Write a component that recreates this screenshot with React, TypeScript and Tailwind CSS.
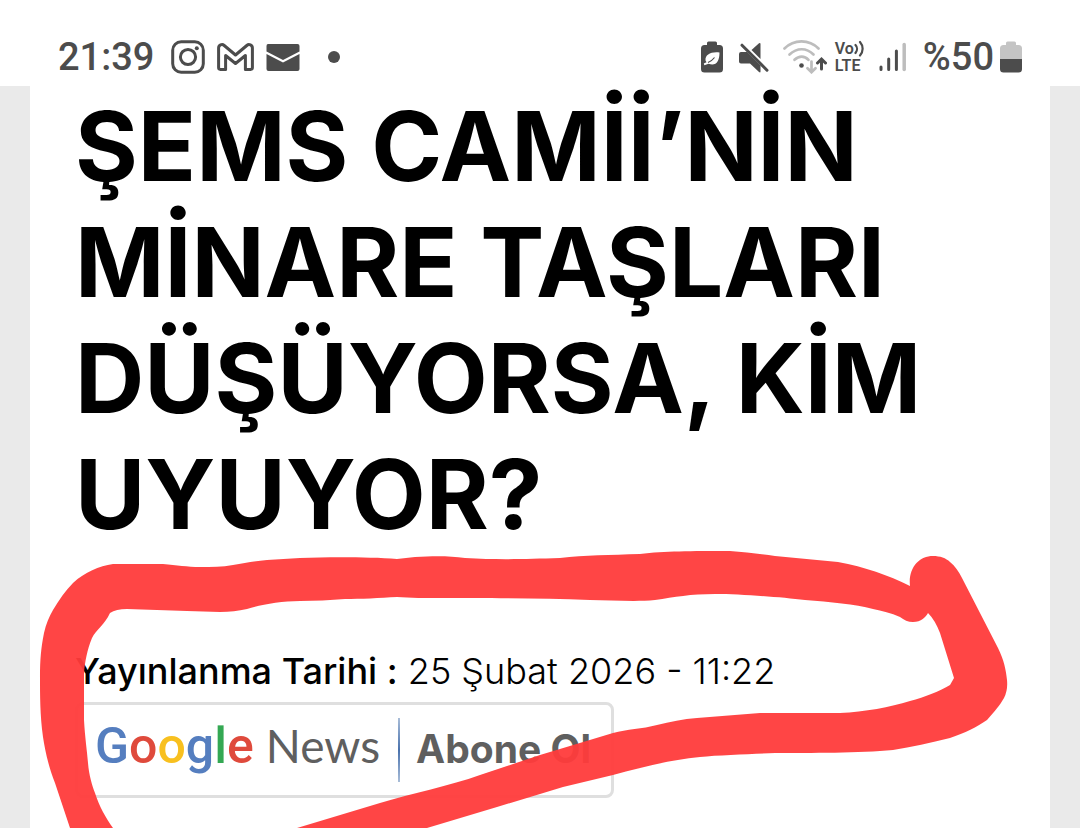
import type { ReactNode } from 'react';

const GOOGLE_LETTERS = [
  { char: 'G', className: 'text-[#557ebf]' },
  { char: 'o', className: 'text-[#df4a3c]' },
  { char: 'o', className: 'text-[#f8c01f]' },
  { char: 'g', className: 'text-[#557ebf]' },
  { char: 'l', className: 'text-[#34a853]' },
  { char: 'e', className: 'text-[#df4a3c]' },
];

function InstagramIcon() {
  return (
    <svg width="34" height="34" viewBox="0 0 34 34" fill="none" stroke="#4c4c4c" aria-hidden="true">
      <rect x="1.7" y="1.7" width="30.6" height="30.6" rx="8.5" strokeWidth="3" />
      <circle cx="17" cy="17" r="7.6" strokeWidth="3" />
      <circle cx="25.8" cy="8.2" r="2" fill="#4c4c4c" stroke="none" />
    </svg>
  );
}

function GmailIcon() {
  return (
    <svg width="37" height="28" viewBox="0 0 37 28" fill="none" stroke="#4c4c4c" strokeWidth="3" strokeLinejoin="round" aria-hidden="true">
      <path d="M1.6 5V24.6Q1.6 26.4 3.4 26.4H8.6V12.5L18.5 20.5L28.4 12.5V26.4H33.6Q35.4 26.4 35.4 24.6V5C35.4 2 32 .6 29.8 2.5L18.5 12L7.2 2.5C5 .6 1.6 2 1.6 5Z" />
    </svg>
  );
}

function MailIcon() {
  return (
    <svg width="34" height="27" viewBox="0 0 34 27" fill="#4c4c4c" aria-hidden="true">
      <path d="M2 0H31.5Q33.5 0 33.5 2V7.5L17 16L.5 7.5V2Q.5 0 2 0Z" />
      <path d="M.5 10L17 18.5L33.5 10V25Q33.5 27 31.5 27H2.5Q.5 27 .5 25Z" />
    </svg>
  );
}

function BatterySaverIcon() {
  return (
    <svg width="22" height="32" viewBox="0 0 22 32" aria-hidden="true">
      <path fill="#4c4c4c" d="M6 4V2Q6 .5 7.5 .5H14.5Q16 .5 16 2V4H18.5Q22 4 22 7.5V28Q22 31.5 18.5 31.5H3.5Q0 31.5 0 28V7.5Q0 4 3.5 4Z" />
      <path fill="#fff" d="M18.5 11.5C10 10.5 4 13.5 4.5 19.5L5.5 21.3L2.8 22.6L3.4 24.2L7.5 22.8C15 25.5 18.5 20.5 18.5 11.5Z" />
      <path fill="none" stroke="#4c4c4c" strokeWidth="1.2" d="M7 21.5C10 20.5 12 18.5 13.5 16.5" />
    </svg>
  );
}

function MutedIcon() {
  return (
    <svg width="30" height="31" viewBox="0 0 30 31" aria-hidden="true">
      <path fill="#4c4c4c" d="M2 10H8L21.5 23.5V29.5Q21.5 31 20 30L11 21.5H2Q0 21.5 0 19.5V12Q0 10 2 10Z" />
      <path fill="#4c4c4c" d="M12.5 8L20 1.2Q21.5 .3 21.5 2V17Z" />
      <path fill="none" stroke="#4c4c4c" strokeWidth="3" strokeLinecap="round" d="M3 3.2L28 28.2" />
    </svg>
  );
}

function WifiIcon() {
  return (
    <svg width="44" height="34" viewBox="0 0 44 34" fill="none" strokeWidth="2.7" strokeLinecap="round" aria-hidden="true">
      <g stroke="#bdbdbd">
        <path d="M1.5 8.5C11-1 26-1 35.5 8.5" />
        <path d="M6.5 14.5C14 7.5 23.5 7.5 30.5 14.5" />
        <path d="M11.5 19.8C16 15.5 21.5 15.5 25.5 19.8" />
        <path d="M28.5 21.5V32M24.5 28.2L28.5 32.2L32.5 28.2" />
      </g>
      <circle cx="18.5" cy="25.5" r="2.3" fill="#4c4c4c" />
      <path stroke="#4c4c4c" strokeWidth="3" d="M38.5 29V19.5M34.5 23L38.5 19L42.5 23" />
    </svg>
  );
}

function VolteIcon() {
  return (
    <div className="flex w-8 flex-col text-[16px] leading-[17px] font-semibold">
      <span className="flex items-center">
        Vo
        <svg width="11" height="17" viewBox="0 0 11 17" fill="none" stroke="#4c4c4c" strokeWidth="2.2" strokeLinecap="round" aria-hidden="true">
          <path d="M1.5 5C3.5 7 3.5 10.5 1.5 13M6 2C9.5 6 9.5 11.5 6 15.5" />
        </svg>
      </span>
      <span>LTE</span>
    </div>
  );
}

function SignalIcon() {
  return (
    <svg width="28" height="30" viewBox="0 0 28 30" fill="none" strokeWidth="3" strokeLinecap="round" aria-hidden="true">
      <path stroke="#4c4c4c" d="M2 25V27.5M9.7 17V27.5M17.4 9V27.5" />
      <path stroke="#bdbdbd" strokeWidth="3.5" d="M25.2 2.5V27.5" />
    </svg>
  );
}

function BatteryIcon() {
  return (
    <svg width="22" height="32" viewBox="0 0 22 32" aria-hidden="true">
      <path fill="#c4c4c4" d="M6 4V2Q6 .5 7.5 .5H14.5Q16 .5 16 2V4H18.5Q22 4 22 7.5V18H0V7.5Q0 4 3.5 4Z" />
      <path fill="#4c4c4c" d="M0 18H22V28Q22 31.5 18.5 31.5H3.5Q0 31.5 0 28Z" />
    </svg>
  );
}

function StatusBar() {
  return (
    <header className="flex h-[86px] items-center justify-between bg-white pt-7 pr-[58px] pl-[58px] font-['Roboto',sans-serif] text-[#4c4c4c]">
      <div className="flex items-center">
        <span className="mr-[17px] text-[38px] leading-none font-medium">21:39</span>
        <div className="flex items-center gap-3">
          <InstagramIcon />
          <GmailIcon />
          <MailIcon />
        </div>
        <span className="ml-7 size-3 rounded-full bg-[#4c4c4c]" />
      </div>
      <div className="flex items-center">
        <div className="mr-3.5 flex items-center gap-4">
          <BatterySaverIcon />
          <MutedIcon />
        </div>
        <WifiIcon />
        <div className="ml-2 flex items-center gap-3">
          <VolteIcon />
          <SignalIcon />
        </div>
        <span className="mr-1.5 ml-4 text-[38px] leading-none font-medium">%50</span>
        <BatteryIcon />
      </div>
    </header>
  );
}

function GoogleNewsButton({ children }: { children: ReactNode }) {
  return (
    <a
      href="#google-news"
      className="flex h-24 w-[539px] items-center rounded-lg border-3 border-[#dfdfdf] bg-white pl-[17px] whitespace-nowrap"
    >
      <span className="flex items-baseline pb-2">
        <span className="font-['Roboto',sans-serif] text-[50px] leading-none font-medium">
          {GOOGLE_LETTERS.map((letter, i) => (
            <span key={i} className={letter.className}>
              {letter.char}
            </span>
          ))}
        </span>
        <span className="ml-3 font-['Lato',sans-serif] text-[46px] leading-none text-[#5f5f5f]">News</span>
      </span>
      <span className="mr-4 ml-[18px] h-16 w-0.5 bg-linear-to-b from-[#a9bdd8] via-[#4a72ad] to-[#a9bdd8]" />
      <span className="pb-1 text-[39px] leading-none font-bold text-[#5f5f5f]">{children}</span>
    </a>
  );
}

// freehand marker stroke drawn over the article
function MarkerStroke() {
  return (
    <svg className="pointer-events-none absolute top-0 left-0" width="1080" height="828" viewBox="0 0 1080 828" aria-hidden="true">
      <path
        fill="#ff3b3b"
        fillOpacity="0.95"
        d="M70 828L55 783C48 765 45 750 43 737C40 715 40 695 40 677C40 660 41 648 44 633C46 624 49 617 53 610C59 600 65 591 73 583C85 572 99 566 113 564H163C177 565 187 567 200 567C212 567 222 567 233 565C245 563 255 561 267 560L300 558C330 557 370 557 397 559L415 557C435 556 450 556 465 558C500 560 525 559 560 558C585 555 610 555 640 554C665 551 690 551 730 551C745 552 760 554 775 556L838 562C865 567 888 575 910 586C908 568 919 556 933 556C940 556 946 558 950 562C955 566 959 572 962 578L998 648C1004 660 1006 670 1007 680Q1008 690 1004 698C1000 705 995 711 987 720C977 727 965 733 950 738C930 743 912 747 893 750C860 753 810 753 775 753C755 754 720 755 700 757C668 760 640 768 613 775L563 787L497 807L427 828H297L380 803C412 793 450 786 480 775L540 755L613 733C627 729 642 729 657 725C670 722 683 719 697 718L760 713H840C865 712 890 707 910 701C925 697 940 691 950 685L954 678L940 633Q935 620 928 613C926 617 921 622 913 622C908 622 904 620 900 617C891 613 882 611 873 609C855 604 830 602 805 600C780 597 740 594 715 594C690 594 675 597 655 600C635 602 610 600 590 600C540 598 480 598 445 598C425 598 410 598 397 597C380 598 360 599 345 599C330 600 315 601 300 601C280 601 260 605 247 609C238 611 230 612 220 612L187 611L127 609Q116 609 110 613C105 624 96 630 92 638C87 650 85 662 84 673V720C85 738 87 750 88 763C89 775 92 785 95 793C99 806 106 818 113 828Z"
      />
    </svg>
  );
}

export default function App() {
  return (
    <div className="relative min-h-screen overflow-hidden bg-[#eaeaea] font-['Inter',sans-serif]">
      <StatusBar />
      <main className="mx-[30px] min-h-[742px] bg-white px-[45px] pt-0.5 text-black">
        <h1 className="text-[96px] leading-[116px] font-bold">
          ŞEMS CAMİİ’NİN
          <br />
          MİNARE TAŞLARI
          <br />
          DÜŞÜYORSA, KİM
          <br />
          UYUYOR?
        </h1>
        <p className="mt-24 mb-2 text-[36px] leading-[46px] font-light">
          <b className="font-medium">Yayınlanma Tarihi :</b> 25 Şubat 2026 - 11:22
        </p>
        <GoogleNewsButton>Abone Ol</GoogleNewsButton>
      </main>
      <MarkerStroke />
    </div>
  );
}
